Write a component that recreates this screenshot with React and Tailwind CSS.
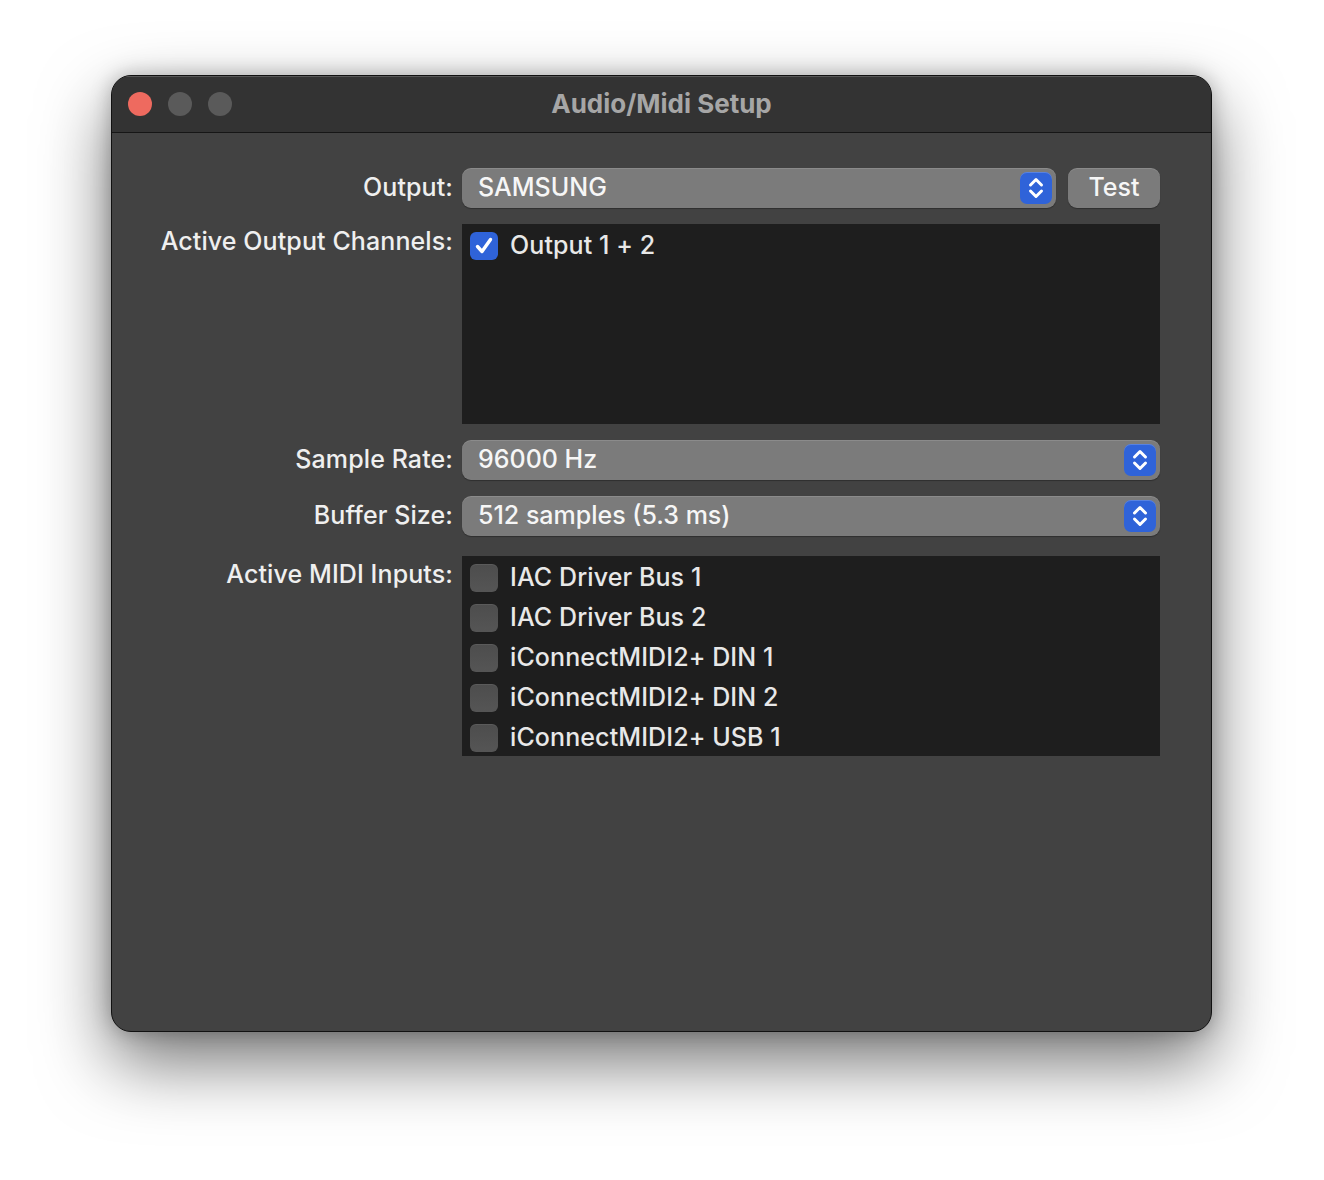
import React from "react";

function Stepper() {
  return (
    <div className="w-[32px] h-[32px] rounded-[7px] bg-[#2f63d9] flex items-center justify-center shadow-[inset_0_1px_0_rgba(255,255,255,0.2)]">
      <svg width="20" height="26" viewBox="0 0 20 26" fill="none" stroke="white" strokeWidth="3" strokeLinecap="round" strokeLinejoin="round">
        <path d="M4.5 10 L10 4.5 L15.5 10" />
        <path d="M4.5 16 L10 21.5 L15.5 16" />
      </svg>
    </div>
  );
}

function Popup({ text, className = "" }) {
  return (
    <div className={`h-[40px] rounded-[9px] bg-[#7b7b7b] flex items-center pl-[16px] pr-[4px] shadow-[inset_0_1px_0_rgba(255,255,255,0.12),0_1px_1px_rgba(0,0,0,0.3)] ${className}`}>
      <span className="flex-1 text-[25px] font-medium text-[#f6f6f6]">{text}</span>
      <Stepper />
    </div>
  );
}

function Check({ checked }) {
  if (checked) {
    return (
      <div className="w-[28px] h-[28px] rounded-[6px] bg-[#2f63d9] flex items-center justify-center shrink-0">
        <svg width="22" height="22" viewBox="0 0 22 22" fill="none" stroke="white" strokeWidth="3.4" strokeLinecap="round" strokeLinejoin="round">
          <path d="M4.5 11.5 L9 16.5 L17.5 4.5" />
        </svg>
      </div>
    );
  }
  return (
    <div className="w-[28px] h-[28px] rounded-[6px] bg-gradient-to-b from-[#4d4d4d] to-[#555555] shadow-[inset_0_1px_0_rgba(255,255,255,0.08)] shrink-0" />
  );
}

function Row({ checked, text }) {
  return (
    <div className="h-[40px] flex items-center pl-[8px] gap-[12px]">
      <Check checked={checked} />
      <span className="text-[25px] font-medium text-[#e8e8e8] tracking-[0.1px]">{text}</span>
    </div>
  );
}

function Label({ children, className = "" }) {
  return <div className={`text-right text-[25px] font-medium text-[#efefef] pr-[9px] tracking-[0.1px] ${className}`}>{children}</div>;
}

export default function App() {
  return (
    <div className="w-[1324px] h-[1180px] bg-white relative" style={{ fontFamily: "Inter, 'Noto Sans', sans-serif" }}>
      <div className="absolute left-[111px] top-[75px] w-[1101px] h-[957px] rounded-[20px] border border-[#111] bg-[#424242] overflow-hidden flex flex-col shadow-[0_30px_70px_rgba(0,0,0,0.55),0_0_20px_rgba(0,0,0,0.25)]">
        <div className="h-[57px] bg-[#333333] border-b border-[#161616] relative flex items-center shadow-[inset_0_1px_0_rgba(255,255,255,0.18)]">
          <div className="flex gap-[16px] pl-[16px]">
            <div className="w-[24px] h-[24px] rounded-full bg-[#ee6a5f]" />
            <div className="w-[24px] h-[24px] rounded-full bg-[#5a5a5a]" />
            <div className="w-[24px] h-[24px] rounded-full bg-[#5a5a5a]" />
          </div>
          <div className="absolute inset-0 flex items-center justify-center pb-[2px] text-[26px] font-bold text-[#a6a6a6]">Audio/Midi Setup</div>
        </div>
        <div className="grid grid-cols-[350px_698px] pt-[35px] gap-y-[16px]">
          <Label className="self-center">Output:</Label>
          <div className="flex gap-[12px]">
            <Popup text="SAMSUNG" className="flex-1" />
            <div className="w-[92px] h-[40px] rounded-[9px] bg-[#7b7b7b] flex items-center justify-center text-[25px] font-medium text-[#f6f6f6] shadow-[inset_0_1px_0_rgba(255,255,255,0.12),0_1px_1px_rgba(0,0,0,0.3)]">Test</div>
          </div>

          <Label className="-mt-[1px]">Active Output Channels:</Label>
          <div className="h-[200px] bg-[#1e1e1e] pt-[2px]">
            <Row checked text="Output 1 + 2" />
          </div>

          <Label className="self-center">Sample Rate:</Label>
          <Popup text="96000 Hz" />

          <Label className="self-center">Buffer Size:</Label>
          <Popup text="512 samples (5.3 ms)" />

          <Label className="mt-[4px]">Active MIDI Inputs:</Label>
          <div className="h-[200px] bg-[#1e1e1e] mt-[4px] pt-[2px]">
            <Row text="IAC Driver Bus 1" />
            <Row text="IAC Driver Bus 2" />
            <Row text="iConnectMIDI2+ DIN 1" />
            <Row text="iConnectMIDI2+ DIN 2" />
            <Row text="iConnectMIDI2+ USB 1" />
          </div>
        </div>
      </div>
    </div>
  );
}
